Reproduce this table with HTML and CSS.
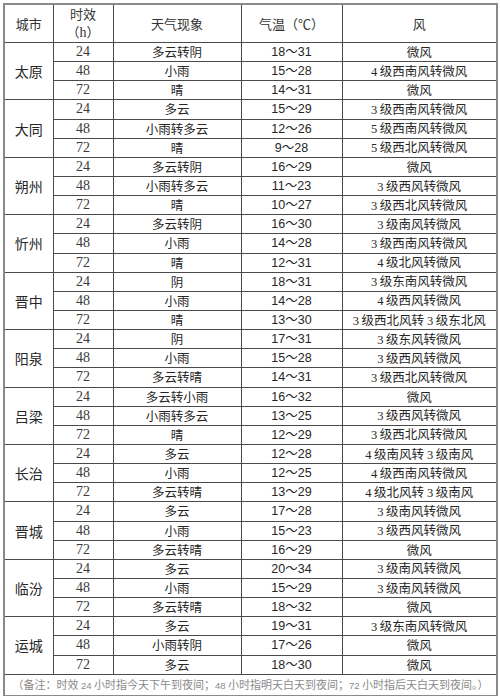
FILE: index.html
```html
<!DOCTYPE html>
<html lang="zh-CN">
<head>
<meta charset="utf-8">
<title>山西天气预报</title>
<link rel="stylesheet" href="styles.css">
</head>
<body>
<table class="forecast">
  <colgroup>
    <col class="c-city"><col class="c-hour"><col class="c-wx"><col class="c-temp"><col class="c-wind">
  </colgroup>
  <thead>
    <tr class="head">
      <th>城市</th>
      <th>时效<br>（<span class="h">h</span>）</th>
      <th>天气现象</th>
      <th>气温（℃）</th>
      <th>风</th>
    </tr>
  </thead>
  <tbody id="rows"></tbody>
  <tfoot>
    <tr class="note">
      <td colspan="5">（备注：时效 <span class="n">24</span> 小时指今天下午到夜间；<span class="n">48</span> 小时指明天白天到夜间；<span class="n">72</span> 小时指后天白天到夜间。）</td>
    </tr>
  </tfoot>
</table>
<script src="app.js"></script>
</body>
</html>
```

FILE: app.js
```js
var data = [
  ["太原", [["多云转阴","18～31","微风"],["小雨","15～28","4级西南风转微风"],["晴","14～31","微风"]]],
  ["大同", [["多云","15～29","3级西南风转微风"],["小雨转多云","12～26","5级西南风转微风"],["晴","9～28","5级西北风转微风"]]],
  ["朔州", [["多云转阴","16～29","微风"],["小雨转多云","11～23","3级西风转微风"],["晴","10～27","3级西北风转微风"]]],
  ["忻州", [["多云转阴","16～30","3级南风转微风"],["小雨","14～28","3级西南风转微风"],["晴","12～31","4级北风转微风"]]],
  ["晋中", [["阴","18～31","3级东南风转微风"],["小雨","14～28","4级西风转微风"],["晴","13～30","3级西北风转 3级东北风"]]],
  ["阳泉", [["阴","17～31","3级东风转微风"],["小雨","15～28","3级西风转微风"],["多云转晴","14～31","3级西北风转微风"]]],
  ["吕梁", [["多云转小雨","16～32","微风"],["小雨转多云","13～25","3级西风转微风"],["晴","12～29","3级西北风转微风"]]],
  ["长治", [["多云","12～28","4级南风转 3级南风"],["小雨","12～25","4级西南风转微风"],["多云转晴","13～29","4级北风转 3级南风"]]],
  ["晋城", [["多云","17～28","3级南风转微风"],["小雨","15～23","3级西风转微风"],["多云转晴","16～29","微风"]]],
  ["临汾", [["多云","20～34","3级南风转微风"],["小雨","15～29","3级南风转微风"],["多云转晴","18～32","微风"]]],
  ["运城", [["多云","19～31","3级东南风转微风"],["小雨转阴","17～26","微风"],["多云","18～30","微风"]]]
];
var hours = ["24","48","72"];
var tbody = document.getElementById("rows");
function esc(s){return s.replace(/(\d+)/g,'<span class="d">$1</span>');}
data.forEach(function(city){
  city[1].forEach(function(r,i){
    var tr = document.createElement("tr");
    tr.className = "row";
    var html = "";
    if(i===0) html += '<td class="city" rowspan="3">'+city[0]+'</td>';
    html += '<td class="hour">'+hours[i]+'</td>';
    html += '<td class="wx">'+r[0]+'</td>';
    html += '<td class="temp">'+r[1]+'</td>';
    html += '<td class="wind">'+esc(r[2])+'</td>';
    tr.innerHTML = html;
    tbody.appendChild(tr);
  });
});
```

FILE: styles.css
```css
html, body {
  margin: 0;
  padding: 0;
  background: #fff;
}
body {
  padding: 3px 0 0 3px;
  font-family: "Noto Sans CJK SC", sans-serif;
  color: #2a2a2a;
}
.forecast {
  border-collapse: collapse;
  table-layout: fixed;
  width: 493px;
  border: 2px solid #8a8a8a;
}
.c-city { width: 49px; }
.c-hour { width: 60px; }
.c-wx { width: 128px; }
.c-temp { width: 101px; }
.c-wind { width: 155px; }

.forecast th,
.forecast td {
  border: 1px solid #4a4a4a;
  padding: 0;
  text-align: center;
  vertical-align: middle;
  white-space: nowrap;
  overflow: hidden;
}
.forecast th {
  font-weight: normal;
  font-size: 13px;
  line-height: 18px;
  color: #333;
}
.head { height: 37px; }
.head .h {
  font-family: "Liberation Serif", serif;
  font-size: 14px;
}
.row { height: 19.15px; }
.row td {
  font-size: 12.5px;
  line-height: 16px;
  color: #262626;
}
.forecast td.city {
  font-size: 14px;
  border-left-color: #8a8a8a;
}
.forecast td.hour {
  font-family: "Liberation Serif", "Noto Sans CJK SC", serif;
  font-size: 14px;
  color: #3a3a3a;
}
.forecast td.temp {
  font-family: "Liberation Sans", "Noto Sans CJK SC", sans-serif;
  font-size: 12.5px;
}
.wind .d {
  font-family: "Liberation Serif", serif;
  font-size: 12.5px;
  margin-right: 2.5px;
}
.note { height: 20px; }
.forecast .note td {
  font-size: 11px;
  line-height: 18px;
  color: #8a8a8a;
  border-color: #8a8a8a;
  border-top-color: #4a4a4a;
}
.note .n {
  font-family: "Liberation Sans", sans-serif;
  font-size: 9.5px;
}
```
